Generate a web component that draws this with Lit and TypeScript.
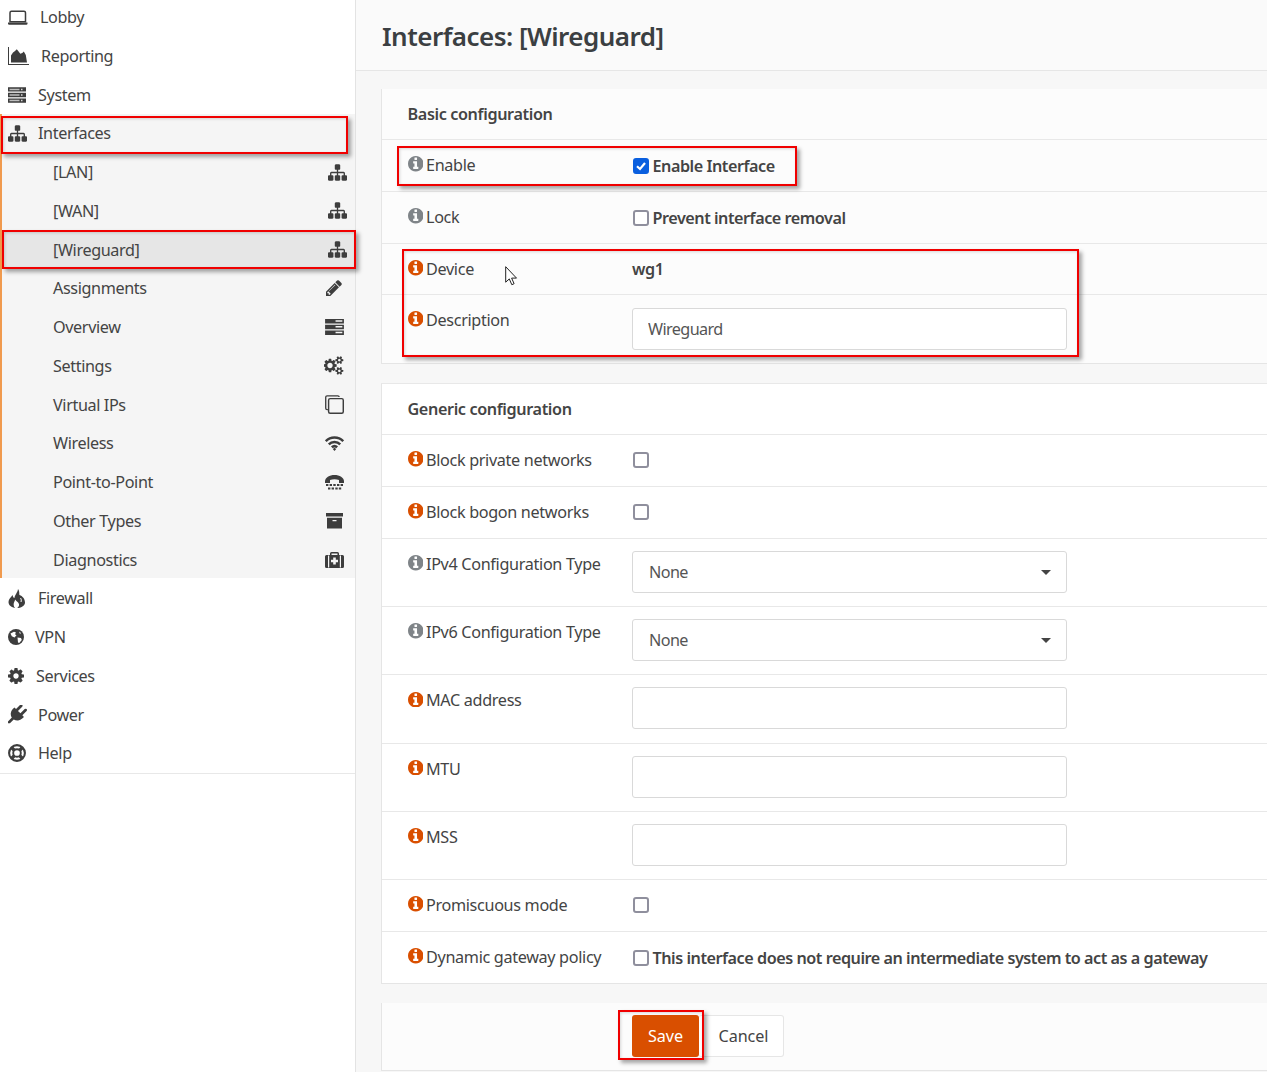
import { LitElement, html, css, svg } from "lit";
import { customElement } from "lit/decorators.js";

const FA: Record<string, string> = {
  sitemap: "M1792 1248v320q0 40-28 68t-68 28h-320q-40 0-68-28t-28-68v-320q0-40 28-68t68-28h96v-192h-512v192h96q40 0 68 28t28 68v320q0 40-28 68t-68 28h-320q-40 0-68-28t-28-68v-320q0-40 28-68t68-28h96v-192h-512v192h96q40 0 68 28t28 68v320q0 40-28 68t-68 28h-320q-40 0-68-28t-28-68v-320q0-40 28-68t68-28h96v-192q0-52 38-90t90-38h512v-192h-96q-40 0-68-28t-28-68v-320q0-40 28-68t68-28h320q40 0 68 28t28 68v320q0 40-28 68t-68 28h-96v192h512q52 0 90 38t38 90v192h96q40 0 68 28t28 68z",
  cog: "M1152 896q0-106-75-181t-181-75-181 75-75 181 75 181 181 75 181-75 75-181zm512-109v222q0 12-8 23t-20 13l-185 28q-19 54-39 91 35 50 107 138 10 12 10 25t-9 23q-27 37-99 108t-94 71q-12 0-26-9l-138-108q-44 23-91 38-16 136-29 186-7 28-36 28h-222q-14 0-24.5-8.5t-11.5-21.5l-28-184q-49-16-90-37l-141 107q-10 9-25 9-14 0-25-11-126-114-165-168-7-10-7-23 0-12 8-23 15-21 51-66.5t54-70.5q-27-50-41-99l-183-27q-13-2-21-12.5t-8-23.5v-222q0-12 8-23t19-13l186-28q14-46 39-92-40-57-107-138-10-12-10-24 0-10 9-23 26-36 98.5-107.5t94.5-71.5q13 0 26 10l138 107q44-23 91-38 16-136 29-186 7-28 36-28h222q14 0 24.5 8.5t11.5 21.5l28 184q49 16 90 37l142-107q9-9 24-9 13 0 25 10 129 119 165 170 7 8 7 22 0 12-8 23-15 21-51 66.5t-54 70.5q26 50 41 98l183 28q13 2 21 12.5t8 23.5z",
  info: "M1152 1376v-160q0-14-9-23t-23-9h-96v-512q0-14-9-23t-23-9h-320q-14 0-23 9t-9 23v160q0 14 9 23t23 9h96v320h-96q-14 0-23 9t-9 23v160q0 14 9 23t23 9h448q14 0 23-9t9-23zm-128-896v-160q0-14-9-23t-23-9h-192q-14 0-23 9t-9 23v160q0 14 9 23t23 9h192q14 0 23-9t9-23zm640 416q0 209-103 385.5t-279.5 279.5-385.5 103-385.5-103-279.5-279.5-103-385.5 103-385.5 279.5-279.5 385.5-103 385.5 103 279.5 279.5 103 385.5z",
  plug: "M1755 453q37 38 37 90.5t-37 90.5l-401 400 150 150-160 160q-163 163-389.5 186.5t-411.5-100.5l-362 362h-181v-181l362-362q-124-185-100.5-411.5t186.5-389.5l160-160 150 150 400-401q38-37 91-37t90 37 37 90.5-37 90.5l-400 401 234 234 401-400q38-37 91-37t90 37z",
  pencil: "M491 1536l91-91-235-235-91 91v107h128v128h107zm523-928q0-22-22-22-10 0-17 7l-542 542q-7 7-7 17 0 22 22 22 10 0 17-7l542-542q7-7 7-17zm-54-192l416 416-832 832h-416v-416zm683 96q0 53-37 90l-166 166-416-416 166-165q36-38 90-38 53 0 91 38l235 234q37 39 37 91z",
  gears: "M832 896q0-106-75-181t-181-75-181 75-75 181 75 181 181 75 181-75 75-181zm768 512q0-52-38-90t-90-38-90 38-38 90q0 53 37.500 90.500t90.500 37.500 90.500-37.500 37.500-90.500zm0-1024q0-52-38-90t-90-38-90 38-38 90q0 53 37.500 90.500t90.500 37.500 90.500-37.500 37.500-90.500zm-384 421v185q0 10-7 19.500t-16 10.500l-155 24q-11 35-32 76 34 48 90 115 7 11 7 20 0 12-7 19-23 30-82.500 89.500t-78.500 59.500q-11 0-21-7l-115-90q-37 19-77 31-11 108-23 155-7 24-30 24h-186q-11 0-20-7.500t-10-17.500l-23-153q-34-10-75-31l-118 89q-7 7-20 7-11 0-21-8-144-133-144-160 0-9 7-19 10-14 41-53t47-61q-23-44-35-82l-152-24q-10-1-17-9.500t-7-19.500v-185q0-10 7-19.500t16-10.500l155-24q11-35 32-76-34-48-90-115-7-11-7-20 0-12 7-20 22-30 82-89t79-59q11 0 21 7l115 90q34-18 77-32 11-108 23-154 7-24 30-24h186q11 0 20 7.500t10 17.500l23 153q34 10 75 31l118-89q8-7 20-7 11 0 21 8 144 133 144 160 0 8-7 19-12 16-42 54t-45 60q23 48 34 82l152 23q10 2 17 10.500t7 19.500zm640 533v140q0 16-149 31-12 27-30 52 51 113 51 138 0 4-4 7-122 71-124 71-8 0-46-47t-52-68q-20 2-30 2t-30-2q-14 21-52 68t-46 47q-2 0-124-71-4-3-4-7 0-25 51-138-18-25-30-52-149-15-149-31v-140q0-16 149-31 13-29 30-52-51-113-51-138 0-4 4-7 4-2 35-20t59-34 30-16q8 0 46 46.500t52 67.500q20-2 30-2t30 2q51-71 92-112l6-2q4 0 124 70 4 3 4 7 0 25-51 138 17 23 30 52 149 15 149 31zm0-1024v140q0 16-149 31-12 27-30 52 51 113 51 138 0 4-4 7-122 71-124 71-8 0-46-47t-52-68q-20 2-30 2t-30-2q-14 21-52 68t-46 47q-2 0-124-71-4-3-4-7 0-25 51-138-18-25-30-52-149-15-149-31v-140q0-16 149-31 13-29 30-52-51-113-51-138 0-4 4-7 4-2 35-20t59-34 30-16q8 0 46 46.500t52 67.500q20-2 30-2t30 2q51-71 92-112l6-2q4 0 124 70 4 3 4 7 0 25-51 138 17 23 30 52 149 15 149 31z",
};

const glyphs: Record<string, unknown> = {
  laptop: svg`<path d="M3.500 1.300h12.500a1.500 1.500 0 0 1 1.500 1.500v9H2V2.800a1.500 1.500 0 0 1 1.500-1.500z" fill="none" stroke="currentColor" stroke-width="1.500"/><path d="M0 12.600h19.500v1a1.200 1.200 0 0 1-1.200 1.200H1.200A1.200 1.200 0 0 1 0 13.600z" fill="currentColor"/>`,
  area: svg`<path d="M0 0h1v17h20v1H0z" fill="currentColor"/><path d="M3 15.500V8.500L5 5.500l2-1.500 1.800-1.700 2 2.500 1.500 2 2-.8 1.500-1.500 2 3.500 1.200 7.500z" fill="currentColor"/>`,
  server: svg`<path d="M0 0h18v4.300H0zM0 5.600h18v4.300H0zM0 11.200h18v4.300H0z" fill="currentColor"/><path d="M1.500 1.400h10v1.500h-10zM1.500 7h10v1.500h-10zM1.500 12.600h10v1.500h-10z" fill="#bdbdbd"/><path d="M13 1.400h1.500v1.500H13zM13 7h1.500v1.500H13zM13 12.600h1.500v1.500H13z" fill="#d8d8d8"/>`,
  serverS: svg`<path d="M0 0h18v4.300H0zM0 5.500h18v4.300H0zM0 11h18v4.300H0z" fill="currentColor"/><path d="M10 1.300h6.500v1.400H10zM10 6.800h6.500v1.400H10zM10 12.300h6.500v1.400H10z" fill="#f5f5f5"/>`,
  fire: svg`<path d="M10 0c2 3 1 5 1.500 6C14.500 7 17 10 17 13.500 17 17 13 19 8.500 19 4 19 .5 16.500 .5 13c0-3 2.500-4.500 4-7 .5 2 1 3 2 3C6.500 6 9.500 4 10 0z" fill="currentColor"/><path d="M7 19c-2.300-3-1.300-5.500 .5-8.500 .2 1.500 2 2 3 3.500 1.200 1.800 .5 4-1.300 5z" fill="#fff"/><path d="M12.500 9c.8 1.200 1 2.500 .5 4" fill="none" stroke="#fff" stroke-width="1"/>`,
  globe: svg`<circle cx="8" cy="8" r="8" fill="currentColor"/><path d="M2.500 4.500 6 2.800l2 .6-1 1.800 1.500 1-2 2.300-2.700-1.300zM9.500 8.500l3.500.6.800 2-2.600 3-1.200-.6zM11 2.500l2 1.500-1 1z" fill="#fff"/>`,
  ring: svg`<circle cx="9" cy="9" r="7.900" fill="none" stroke="currentColor" stroke-width="2.100"/><circle cx="9" cy="9" r="3.800" fill="none" stroke="currentColor" stroke-width="1.900"/><path d="M3.500 3.500l3 3M14.500 3.500l-3 3M3.500 14.500l3-3M14.500 14.500l-3-3" stroke="currentColor" stroke-width="3.400"/>`,
  copy: svg`<path d="M2.800 14.300H2a1.300 1.300 0 0 1-1.300-1.300V2A1.300 1.300 0 0 1 2 .8h10.500a1.300 1.300 0 0 1 1.300 1.200" fill="none" stroke="currentColor" stroke-width="1.300"/><rect x="3.500" y="3.500" width="14.300" height="14.300" rx="1.500" fill="none" stroke="currentColor" stroke-width="1.400"/>`,
  wifi: svg`<g fill="none" stroke="currentColor" stroke-width="2.500"><path d="M.8 5.200C5.500 .3 13.500 .3 18.200 5.200"/><path d="M3.800 8.300c3-3 8.400-3 11.400 0"/><path d="M6.800 11.300c1.500-1.300 3.900-1.300 5.400 0"/></g><path d="M7.800 13l1.700-1.300L11.200 13l-1.700 2z" fill="currentColor"/>`,
  phone: svg`<path d="M0 6.500C0 2.500 4.500 0 9.500 0S19 2.500 19 6.500V8h-5V5c-2.800-.9-6.200-.9-9 0v3H0z" fill="currentColor"/><path d="M1 9h2.400v2H1zM4.600 9H7v2H4.600zM8.300 9h2.400v2H8.300zM12 9h2.400v2H12zM15.600 9H18v2h-2.400zM3 12.500h2.400v2H3zM6.600 12.500H9v2H6.600zM10.300 12.500h2.400v2h-2.400zM13.800 12.500h2.400v2h-2.400z" fill="currentColor"/>`,
  archive: svg`<path d="M0 0h17v3.500H0z" fill="currentColor"/><path fill-rule="evenodd" d="M1 4.800h15V15.500H1zM6.500 7v1.300h4V7z" fill="currentColor"/>`,
  medkit: svg`<path fill-rule="evenodd" d="M5 3V1.500A1.500 1.500 0 0 1 6.500 0h6A1.500 1.500 0 0 1 14 1.500V3h3.500A1.500 1.500 0 0 1 19 4.500v10a1.500 1.500 0 0 1-1.500 1.500H1.500A1.500 1.500 0 0 1 0 14.500v-10A1.500 1.500 0 0 1 1.500 3zM6.500 1.500V3h6V1.500zM8.200 5.500v2.200H6v2.600h2.200v2.200h2.600v-2.200H13V7.700h-2.200V5.500zM3 3.500v12h1.200v-12zM14.800 3.500v12H16v-12z" fill="currentColor"/>`,
};

const ic = (name: string, w: number, h: number, vw = w, vh = h) =>
  html`<svg class="ic" width=${w} height=${h} viewBox="0 0 ${vw} ${vh}" style="flex:0 0 ${w}px">${glyphs[name]}</svg>`;
const fa = (name: string, w: number, h: number, box: string) =>
  html`<svg class="ic" width=${w} height=${h} viewBox=${box} style="flex:0 0 ${w}px"><path d=${FA[name]} fill="currentColor"></path></svg>`;
const map = (size: number) =>
  html`<svg class="ic map" width=${size} height=${size} viewBox="0 128 1792 1536" style="flex:0 0 ${size}px"><path d=${FA.sitemap} fill="currentColor"></path></svg>`;

type Top = { label: string; icon: unknown; gap: number };

const before: Top[] = [
  { label: "Lobby", icon: ic("laptop", 20, 15), gap: 12 },
  { label: "Reporting", icon: ic("area", 21, 18), gap: 12 },
  { label: "System", icon: ic("server", 18, 16, 18, 15.500), gap: 12 },
];
const after: Top[] = [
  { label: "Firewall", icon: ic("fire", 17, 19), gap: 13 },
  { label: "VPN", icon: ic("globe", 16, 16), gap: 11 },
  { label: "Services", icon: fa("cog", 16, 16, "128 128 1536 1536"), gap: 12 },
  { label: "Power", icon: fa("plug", 19, 19, "0 128 1792 1664"), gap: 11 },
  { label: "Help", icon: ic("ring", 18, 18), gap: 12 },
];
const subs: { label: string; icon: unknown; active?: boolean }[] = [
  { label: "[LAN]", icon: map(19) },
  { label: "[WAN]", icon: map(19) },
  { label: "[Wireguard]", icon: map(19), active: true },
  { label: "Assignments", icon: fa("pencil", 16, 16, "128 128 1536 1536") },
  { label: "Overview", icon: ic("serverS", 19, 16, 18, 15.300) },
  { label: "Settings", icon: fa("gears", 20, 19, "0 128 1920 1536") },
  { label: "Virtual IPs", icon: ic("copy", 19, 19, 18.500, 18.500) },
  { label: "Wireless", icon: ic("wifi", 19, 15) },
  { label: "Point-to-Point", icon: ic("phone", 19, 15) },
  { label: "Other Types", icon: ic("archive", 17, 16) },
  { label: "Diagnostics", icon: ic("medkit", 19, 16) },
];

type Row = {
  label: string;
  warn?: boolean;
  kind: "check" | "text" | "input" | "select";
  text?: string;
  value?: string;
  checked?: boolean;
  h: "short" | "tall" | "dev" | "desc";
};

const rowsA: Row[] = [
  { label: "Enable", kind: "check", text: "Enable Interface", checked: true, h: "short" },
  { label: "Lock", kind: "check", text: "Prevent interface removal", h: "short" },
  { label: "Device", warn: true, kind: "text", text: "wg1", h: "dev" },
  { label: "Description", warn: true, kind: "input", value: "Wireguard", h: "desc" },
];
const rowsB: Row[] = [
  { label: "Block private networks", warn: true, kind: "check", h: "short" },
  { label: "Block bogon networks", warn: true, kind: "check", h: "short" },
  { label: "IPv4 Configuration Type", kind: "select", value: "None", h: "tall" },
  { label: "IPv6 Configuration Type", kind: "select", value: "None", h: "tall" },
  { label: "MAC address", warn: true, kind: "input", value: "", h: "tall" },
  { label: "MTU", warn: true, kind: "input", value: "", h: "tall" },
  { label: "MSS", warn: true, kind: "input", value: "", h: "tall" },
  { label: "Promiscuous mode", warn: true, kind: "check", h: "short" },
  {
    label: "Dynamic gateway policy",
    warn: true,
    kind: "check",
    text: "This interface does not require an intermediate system to act as a gateway",
    h: "short",
  },
];

const marks = ["m1", "m2", "m3", "m4", "m5"];

@customElement("app-root")
export class AppRoot extends LitElement {
  static styles = css`
    :host {
      display: flex;
      position: relative;
      width: 1267px;
      height: 1072px;
      overflow: hidden;
      background: #f7f7f7;
      color: #444;
      font-family: "Noto Sans", "Open Sans", sans-serif;
      font-size: 16.2px;
      letter-spacing: -0.38px;
    }
    .side {
      flex: 0 0 355px;
      background: #fff;
      border-right: 1px solid #e3e3e3;
    }
    .nav {
      margin-top: -2.2px;
      border-bottom: 1px solid #e8e8e8;
    }
    .top,
    .sub-item {
      display: flex;
      align-items: center;
      height: 38.75px;
      box-sizing: border-box;
    }
    .top {
      padding-left: 8px;
    }
    .ic {
      display: block;
      color: #3d3d3d;
    }
    .sub {
      height: 464px;
      background: #f5f5f5;
      border-left: 2px solid #f09a4e;
    }
    .after {
      padding-top: 1px;
    }
    .sub .top {
      padding-left: 6px;
    }
    .sub-item {
      padding-left: 51px;
    }
    .sub-item.active {
      background: #e6e6e6;
    }
    .slot {
      margin-left: auto;
      width: 20px;
      margin-right: 11px;
      display: flex;
      justify-content: center;
    }
    .slot .map {
      transform: translateX(3px);
    }
    .main {
      flex: 1;
      min-width: 0;
    }
    .head {
      height: 71px;
      box-sizing: border-box;
      border-bottom: 1px solid #e6e6e6;
      background: #fafafa;
      padding: 17px 0 0 26px;
      font-size: 26px;
      line-height: 38px;
      font-weight: 600;
      letter-spacing: -0.52px;
      color: #3b3f42;
    }
    .body {
      padding: 18px 0 0 25px;
    }
    .sec {
      background: #fff;
      border-left: 1px solid #e5e5e5;
      border-bottom: 1px solid #e5e5e5;
      margin-bottom: 19px;
    }
    .sec + .sec {
      border-top: 1px solid #e8e8e8;
    }
    .title {
      height: 50px;
      box-sizing: border-box;
      background: #fcfcfc;
      padding: 12px 0 0 25.5px;
      font-weight: 600;
      line-height: 26px;
    }
    .sec + .sec .title {
      background: #fff;
    }
    .row {
      display: grid;
      grid-template-columns: 224.500px 1fr;
      border-top: 1px solid #e8e8e8;
      padding: 12px 0 0 25.5px;
      box-sizing: border-box;
    }
    .first .row {
      background: #fcfcfc;
    }
    .short {
      height: 52px;
    }
    .dev {
      height: 51px;
    }
    .tall {
      height: 68.2px;
    }
    .desc {
      height: 69px;
    }
    .desc .field {
      margin-top: 1px;
    }
    .lab {
      display: flex;
      align-items: center;
      height: 26px;
      gap: 3px;
      letter-spacing: -0.33px;
    }
    .info {
      width: 15.5px;
      height: 15.5px;
      color: #7f8488;
      flex: none;
      margin-top: -2px;
    }
    .info.warn {
      color: #d94f00;
    }
    .val {
      display: flex;
      align-items: center;
      height: 28px;
      gap: 4px;
      font-weight: 600;
      letter-spacing: -0.47px;
    }
    .val.bare {
      height: 26px;
    }
    .box {
      box-sizing: border-box;
      width: 16px;
      height: 16px;
      flex: none;
      margin-left: 0.5px;
      border: 2px solid #8f8f9d;
      border-radius: 3px;
      background: #fff;
    }
    .box.on {
      background: #0a5fdf;
      border-color: #0a5fdf;
      display: flex;
      align-items: center;
      justify-content: center;
    }
    .field {
      box-sizing: border-box;
      width: 435px;
      height: 42px;
      border: 1px solid #d9d9d9;
      border-radius: 3px;
      background: #fff;
      padding: 0 16px;
      font: inherit;
      font-weight: 400;
      color: #555;
      display: flex;
      align-items: center;
      outline: none;
      letter-spacing: -0.6px;
    }
    input.field {
      padding: 0 15px;
    }
    .caret {
      margin-left: auto;
      margin-right: -1px;
      width: 0;
      height: 0;
      border-left: 5px solid transparent;
      border-right: 5px solid transparent;
      border-top: 5px solid #444;
    }
    .actions {
      display: flex;
      height: 68px;
      box-sizing: border-box;
      background: #fcfcfc;
      border-left: 1px solid #e5e5e5;
      border-bottom: 1px solid #e5e5e5;
      padding: 12px 0 0 250px;
    }
    .btn {
      box-sizing: border-box;
      height: 42px;
      display: flex;
      align-items: center;
      justify-content: center;
      border-radius: 3px;
      letter-spacing: -0.1px;
    }
    .save {
      width: 67px;
      background: #d94f00;
      color: #fff;
    }
    .cancel {
      width: 85px;
      padding-left: 5px;
      background: #fff;
      border: 1px solid #e6e6e6;
      border-left: 0;
    }
    .mark {
      position: absolute;
      box-sizing: border-box;
      border: 2px solid #f00000;
      box-shadow: 3px 3px 4px rgba(0, 0, 0, 0.35), inset 1px 1px 3px rgba(0, 0, 0, 0.15);
      pointer-events: none;
    }
    .m1 { left: 1px; top: 116px; width: 347px; height: 38px; }
    .m2 { left: 2px; top: 230px; width: 354px; height: 39px; }
    .m3 { left: 397px; top: 146px; width: 400px; height: 40px; }
    .m4 { left: 402px; top: 249px; width: 677px; height: 108px; }
    .m5 { left: 618px; top: 1010px; width: 86px; height: 50px; }
    .cursor {
      position: absolute;
      left: 505px;
      top: 266px;
    }
  `;

  private topRow(t: Top) {
    return html`<div class="top">${t.icon}<span style="margin-left:${t.gap}px">${t.label}</span></div>`;
  }

  private value(r: Row) {
    if (r.kind === "check")
      return html`<div class="val ${r.text ? "" : "bare"}">
        <span class="box ${r.checked ? "on" : ""}">
          ${r.checked
            ? html`<svg width="12" height="12" viewBox="0 0 12 12"><path d="M2 6.200 5 9l5-6" fill="none" stroke="#fff" stroke-width="2.200"></path></svg>`
            : ""}
        </span>
        ${r.text ? html`<span>${r.text}</span>` : ""}
      </div>`;
    if (r.kind === "text") return html`<div class="val bare">${r.text}</div>`;
    if (r.kind === "input") return html`<input class="field" .value=${r.value ?? ""} />`;
    return html`<div class="field"><span>${r.value}</span><span class="caret"></span></div>`;
  }

  private row(r: Row) {
    return html`<div class="row ${r.h}">
      <div class="lab">
        <svg class="info ${r.warn ? "warn" : ""}" viewBox="128 128 1536 1536"><path d=${FA.info} fill="currentColor"></path></svg>
        <span>${r.label}</span>
      </div>
      <div>${this.value(r)}</div>
    </div>`;
  }

  render() {
    return html`
      <aside class="side">
        <div class="nav">
          ${before.map((t) => this.topRow(t))}
          <div class="sub">
            ${this.topRow({ label: "Interfaces", icon: map(19), gap: 11 })}
            ${subs.map(
              (s) => html`<div class="sub-item ${s.active ? "active" : ""}">
                <span>${s.label}</span><span class="slot">${s.icon}</span>
              </div>`
            )}
          </div>
          <div class="after">${after.map((t) => this.topRow(t))}</div>
        </div>
      </aside>
      <main class="main">
        <div class="head">Interfaces: [Wireguard]</div>
        <div class="body">
          <section class="sec first">
            <div class="title">Basic configuration</div>
            ${rowsA.map((r) => this.row(r))}
          </section>
          <section class="sec">
            <div class="title">Generic configuration</div>
            ${rowsB.map((r) => this.row(r))}
          </section>
          <div class="actions">
            <div class="btn save">Save</div>
            <div class="btn cancel">Cancel</div>
          </div>
        </div>
      </main>
      ${marks.map((m) => html`<div class="mark ${m}"></div>`)}
      <svg class="cursor" width="13" height="20" viewBox="0 0 13 20">
        <path d="M.7.7v15.500l3.600-3.300 2.500 5.800 2.300-1-2.500-5.600h4.900z" fill="#fff" stroke="#222" stroke-width="1"></path>
      </svg>
    `;
  }
}
